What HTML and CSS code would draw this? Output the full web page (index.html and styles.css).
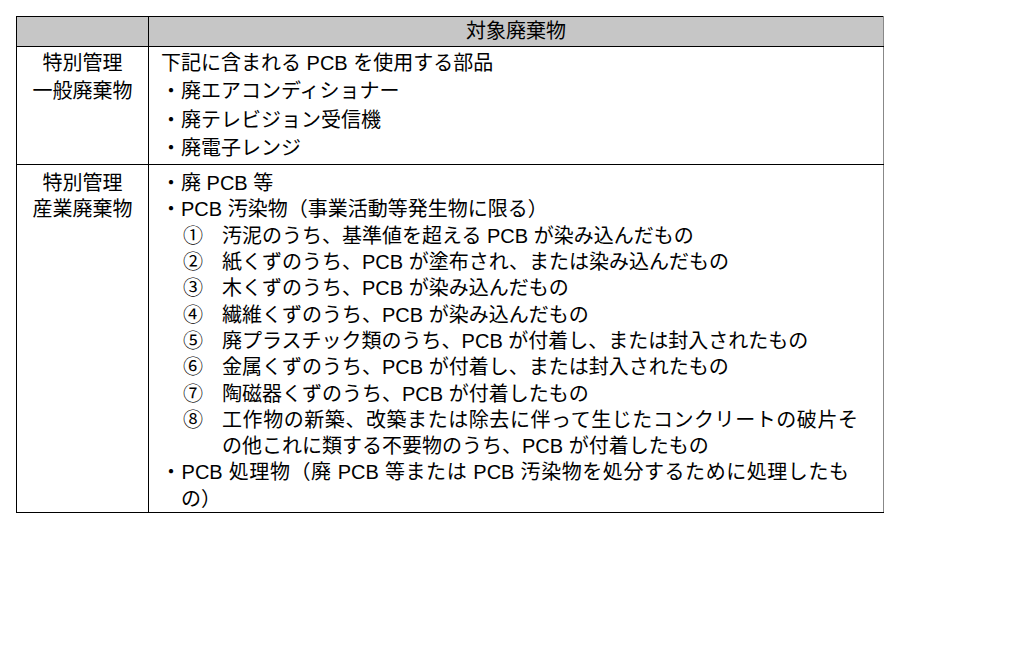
FILE: index.html
```html
<!DOCTYPE html>
<html lang="ja">
<head>
    <meta charset="utf-8">
    <link rel="stylesheet" href="styles.css">
</head>
<body>
    <div class="page">
        <table class="waste">
            <tr class="head">
                <th class="cat"></th>
                <th>対象廃棄物</th>
            </tr>
            <tr class="general">
                <td class="cat">特別管理<br>一般廃棄物</td>
                <td class="items">
                    <div class="line lead">下記に含まれる PCB を使用する部品</div>
                    <div class="line">・廃エアコンディショナー</div>
                    <div class="line">・廃テレビジョン受信機</div>
                    <div class="line">・廃電子レンジ</div>
                </td>
            </tr>
            <tr class="industrial">
                <td class="cat">特別管理<br>産業廃棄物</td>
                <td class="items">
                    <div class="line">・廃 PCB 等</div>
                    <div class="line">・PCB 汚染物（事業活動等発生物に限る）</div>
                    <div class="num"><span class="mark">①</span><span>汚泥のうち、基準値を超える PCB が染み込んだもの</span></div>
                    <div class="num"><span class="mark">②</span><span>紙くずのうち、PCB が塗布され、または染み込んだもの</span></div>
                    <div class="num"><span class="mark">③</span><span>木くずのうち、PCB が染み込んだもの</span></div>
                    <div class="num"><span class="mark">④</span><span>繊維くずのうち、PCB が染み込んだもの</span></div>
                    <div class="num"><span class="mark">⑤</span><span>廃プラスチック類のうち、PCB が付着し、または封入されたもの</span></div>
                    <div class="num"><span class="mark">⑥</span><span>金属くずのうち、PCB が付着し、または封入されたもの</span></div>
                    <div class="num"><span class="mark">⑦</span><span>陶磁器くずのうち、PCB が付着したもの</span></div>
                    <div class="num">
                        <span class="mark">⑧</span>
                        <div>
                            <div class="justify long-num">工作物の新築、改築または除去に伴って生じたコンクリートの破片そ</div>
                            <div>の他これに類する不要物のうち、PCB が付着したもの</div>
                        </div>
                    </div>
                    <div class="line">
                        <div class="justify long-bullet">・PCB 処理物（廃 PCB 等または PCB 汚染物を処分するために処理したも</div>
                        <div class="cont">の）</div>
                    </div>
                </td>
            </tr>
        </table>
    </div>
</body>
</html>
```

FILE: styles.css
```css
body {
    margin: 0;
    background: #fff;
    color: #000;
    font-family: "Liberation Sans", "Noto Sans CJK JP", sans-serif;
    font-size: 20px;
}
.page {
    padding: 16px 0 0 16px;
}
.waste {
    border-collapse: collapse;
    width: 868px;
}
.waste th,
.waste td {
    border: 1px solid #000;
    padding: 0;
    vertical-align: top;
}
.waste tr > :last-child {
    border-right-color: #888;
}
.waste .head th {
    height: 29px;
    font-weight: normal;
    line-height: 29px;
    text-align: center;
    vertical-align: middle;
    /* dotted screen like the printed original */
    background: repeating-conic-gradient(#a6a6a6 0 25%, #e6e6e6 0 50%) 0 0 / 2px 2px;
}
.waste .cat {
    width: 131px;
    text-align: center;
}
.general td {
    line-height: 28.3px;
    padding-top: 2px;
    padding-bottom: 2px;
}
.industrial td {
    line-height: 26.3px;
    padding-top: 5px;
}
.items {
    padding-left: 12px !important;
    white-space: nowrap;
}
.num {
    display: flex;
    padding-left: 22px;
}
.num .mark {
    width: 39px;
    flex: none;
}
/* wrapped lines are spread to the right margin, as in the printed page */
.justify {
    white-space: normal;
    text-align: justify;
    text-align-last: justify;
}
.long-num {
    width: 636px;
}
.long-bullet {
    width: 688px;
}
.cont {
    padding-left: 20px;
}
```
